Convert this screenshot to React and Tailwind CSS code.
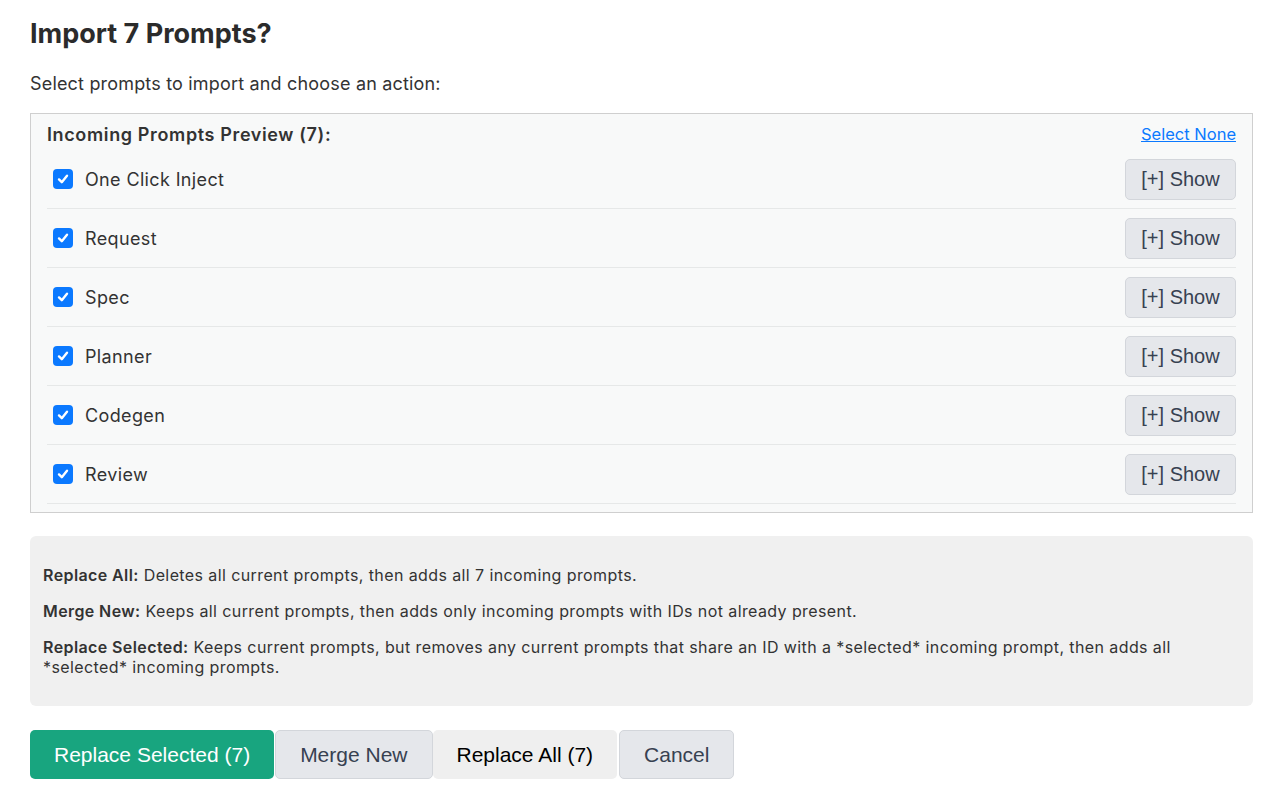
import React, { useState } from 'react';

const PROMPTS = ['One Click Inject', 'Request', 'Spec', 'Planner', 'Codegen', 'Review', 'Summary'];

const Checkbox = ({ checked, onChange }) => (
    <button
        onClick={onChange}
        className={`w-[20px] h-[20px] rounded-[4px] flex items-center justify-center shrink-0 ${checked ? 'bg-[#0b79ff]' : 'bg-white border border-gray-400'}`}
    >
        {checked && (
            <svg width="14" height="14" viewBox="0 0 14 14" fill="none">
                <path d="M3 7.4 L5.8 10.2 L11 3.8" stroke="white" strokeWidth="2.4" strokeLinecap="round" strokeLinejoin="round" />
            </svg>
        )}
    </button>
);

const App = () => {
    const [selected, setSelected] = useState(PROMPTS.map(() => true));
    const count = selected.filter(Boolean).length;

    const toggle = (i) => setSelected(s => s.map((v, j) => (j === i ? !v : v)));

    return (
        <div className="min-h-screen bg-white pl-[30px] pr-[27px] pt-[18px] text-[#333] font-['Inter',sans-serif]">
            <h2 className="text-[27px] leading-[32px] font-bold text-[#2b2b2b]">Import 7 Prompts?</h2>
            <p className="mt-[22px] text-[18px] leading-[24px] tracking-[0.01em]">Select prompts to import and choose an action:</p>

            {/* list is capped in height; the 7th prompt sits below the fold */}
            <div className="mt-[17px] h-[400px] overflow-hidden border border-[#cfcfcf] bg-[#f8f9f9] px-4 pt-2">
                <div className="flex items-center justify-between h-[24px] mb-[4px]">
                    <span className="text-[18px] font-semibold tracking-[0.035em]">Incoming Prompts Preview (7):</span>
                    <a href="#" className="text-[16.5px] text-[#0b79ff] underline" onClick={e => { e.preventDefault(); setSelected(PROMPTS.map(() => false)); }}>
                        Select None
                    </a>
                </div>
                {PROMPTS.map((name, i) => (
                    <div key={name} className="flex items-center h-[59px] border-b border-[#e6e8e8] pl-[6px]">
                        <Checkbox checked={selected[i]} onChange={() => toggle(i)} />
                        <span className="ml-[12px] text-[18px] tracking-[0.02em]">{name}</span>
                        <button className="ml-auto h-[41px] w-[111px] rounded-[5px] border border-[#d3d6db] bg-[#e5e7eb] text-[20px] text-[#374151] font-['Liberation_Sans',sans-serif]">
                            [+] Show
                        </button>
                    </div>
                ))}
            </div>

            <div className="mt-[23px] rounded-[6px] bg-[#f0f0f0] px-[13px] pt-[13px] pb-[13px] text-[16px] leading-[20px] tracking-[0.025em]">
                <p className="my-4"><strong className="font-semibold">Replace All:</strong> Deletes all current prompts, then adds all 7 incoming prompts.</p>
                <p className="my-4"><strong className="font-semibold">Merge New:</strong> Keeps all current prompts, then adds only incoming prompts with IDs not already present.</p>
                <p className="my-4"><strong className="font-semibold">Replace Selected:</strong> Keeps current prompts, but removes any current prompts that share an ID with a *selected* incoming prompt, then adds all *selected* incoming prompts.</p>
            </div>

            <div className="mt-[24px] flex items-center font-['Liberation_Sans',sans-serif] text-[21px]">
                <button className="h-[49px] px-[24px] rounded-[5px] bg-[#18a57f] text-white">Replace Selected ({count})</button>
                <button className="ml-[1px] h-[49px] px-[24px] rounded-[5px] border border-[#d3d6db] bg-[#e5e7eb] text-[#374151]">Merge New</button>
                <button className="h-[49px] px-[24px] rounded-[5px] bg-[#efefef] text-black">Replace All (7)</button>
                <button className="ml-[2px] h-[49px] px-[24px] rounded-[5px] border border-[#d3d6db] bg-[#e5e7eb] text-[#374151]">Cancel</button>
            </div>
        </div>
    );
};

export default App;
